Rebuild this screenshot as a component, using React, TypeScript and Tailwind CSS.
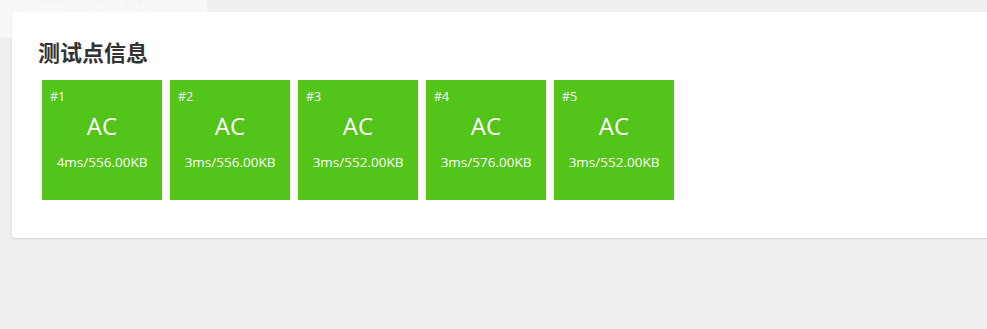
const cases = [
  { id: 1, time: '4ms', mem: '556.00KB' },
  { id: 2, time: '3ms', mem: '556.00KB' },
  { id: 3, time: '3ms', mem: '552.00KB' },
  { id: 4, time: '3ms', mem: '576.00KB' },
  { id: 5, time: '3ms', mem: '552.00KB' },
];

export default function App() {
  return (
    <div
      className="relative min-h-[329px] overflow-hidden bg-[#eeeeee] pt-3 pl-3"
      style={{ fontFamily: '"Open Sans", "Noto Sans CJK SC", sans-serif' }}
    >
      <div className="w-[1000px] rounded bg-white pt-[26px] pb-[38px] pl-[26px] shadow-[0_1px_2px_rgba(0,0,0,0.12)]">
        <h2 className="text-[22px] leading-[28px] font-bold text-[#333]">测试点信息</h2>
        <div className="mt-[14px] ml-1 flex gap-2">
          {cases.map(c => (
            <div key={c.id} className="flex h-[120px] w-[120px] flex-col bg-[#52c41a] text-white">
              <div className="pt-[9px] pl-2 text-[12.5px] leading-[16px] font-medium">#{c.id}</div>
              <div className="mt-[6px] text-center text-[24px] leading-[30px]">AC</div>
              <div className="mt-[11px] text-center text-[13.5px] leading-[20px] font-medium">
                {c.time}/{c.mem}
              </div>
            </div>
          ))}
        </div>
      </div>

      {/* faded toast */}
      <div className="absolute top-0 left-0 h-[38px] w-[207px] overflow-hidden bg-white/50 pl-5 text-[13px] text-white/70">
        <div className="text-[11px] leading-[13px]">Accepted in 19ms 26.0KB</div>
        <div className="leading-[18px]">accepted</div>
      </div>
    </div>
  );
}
